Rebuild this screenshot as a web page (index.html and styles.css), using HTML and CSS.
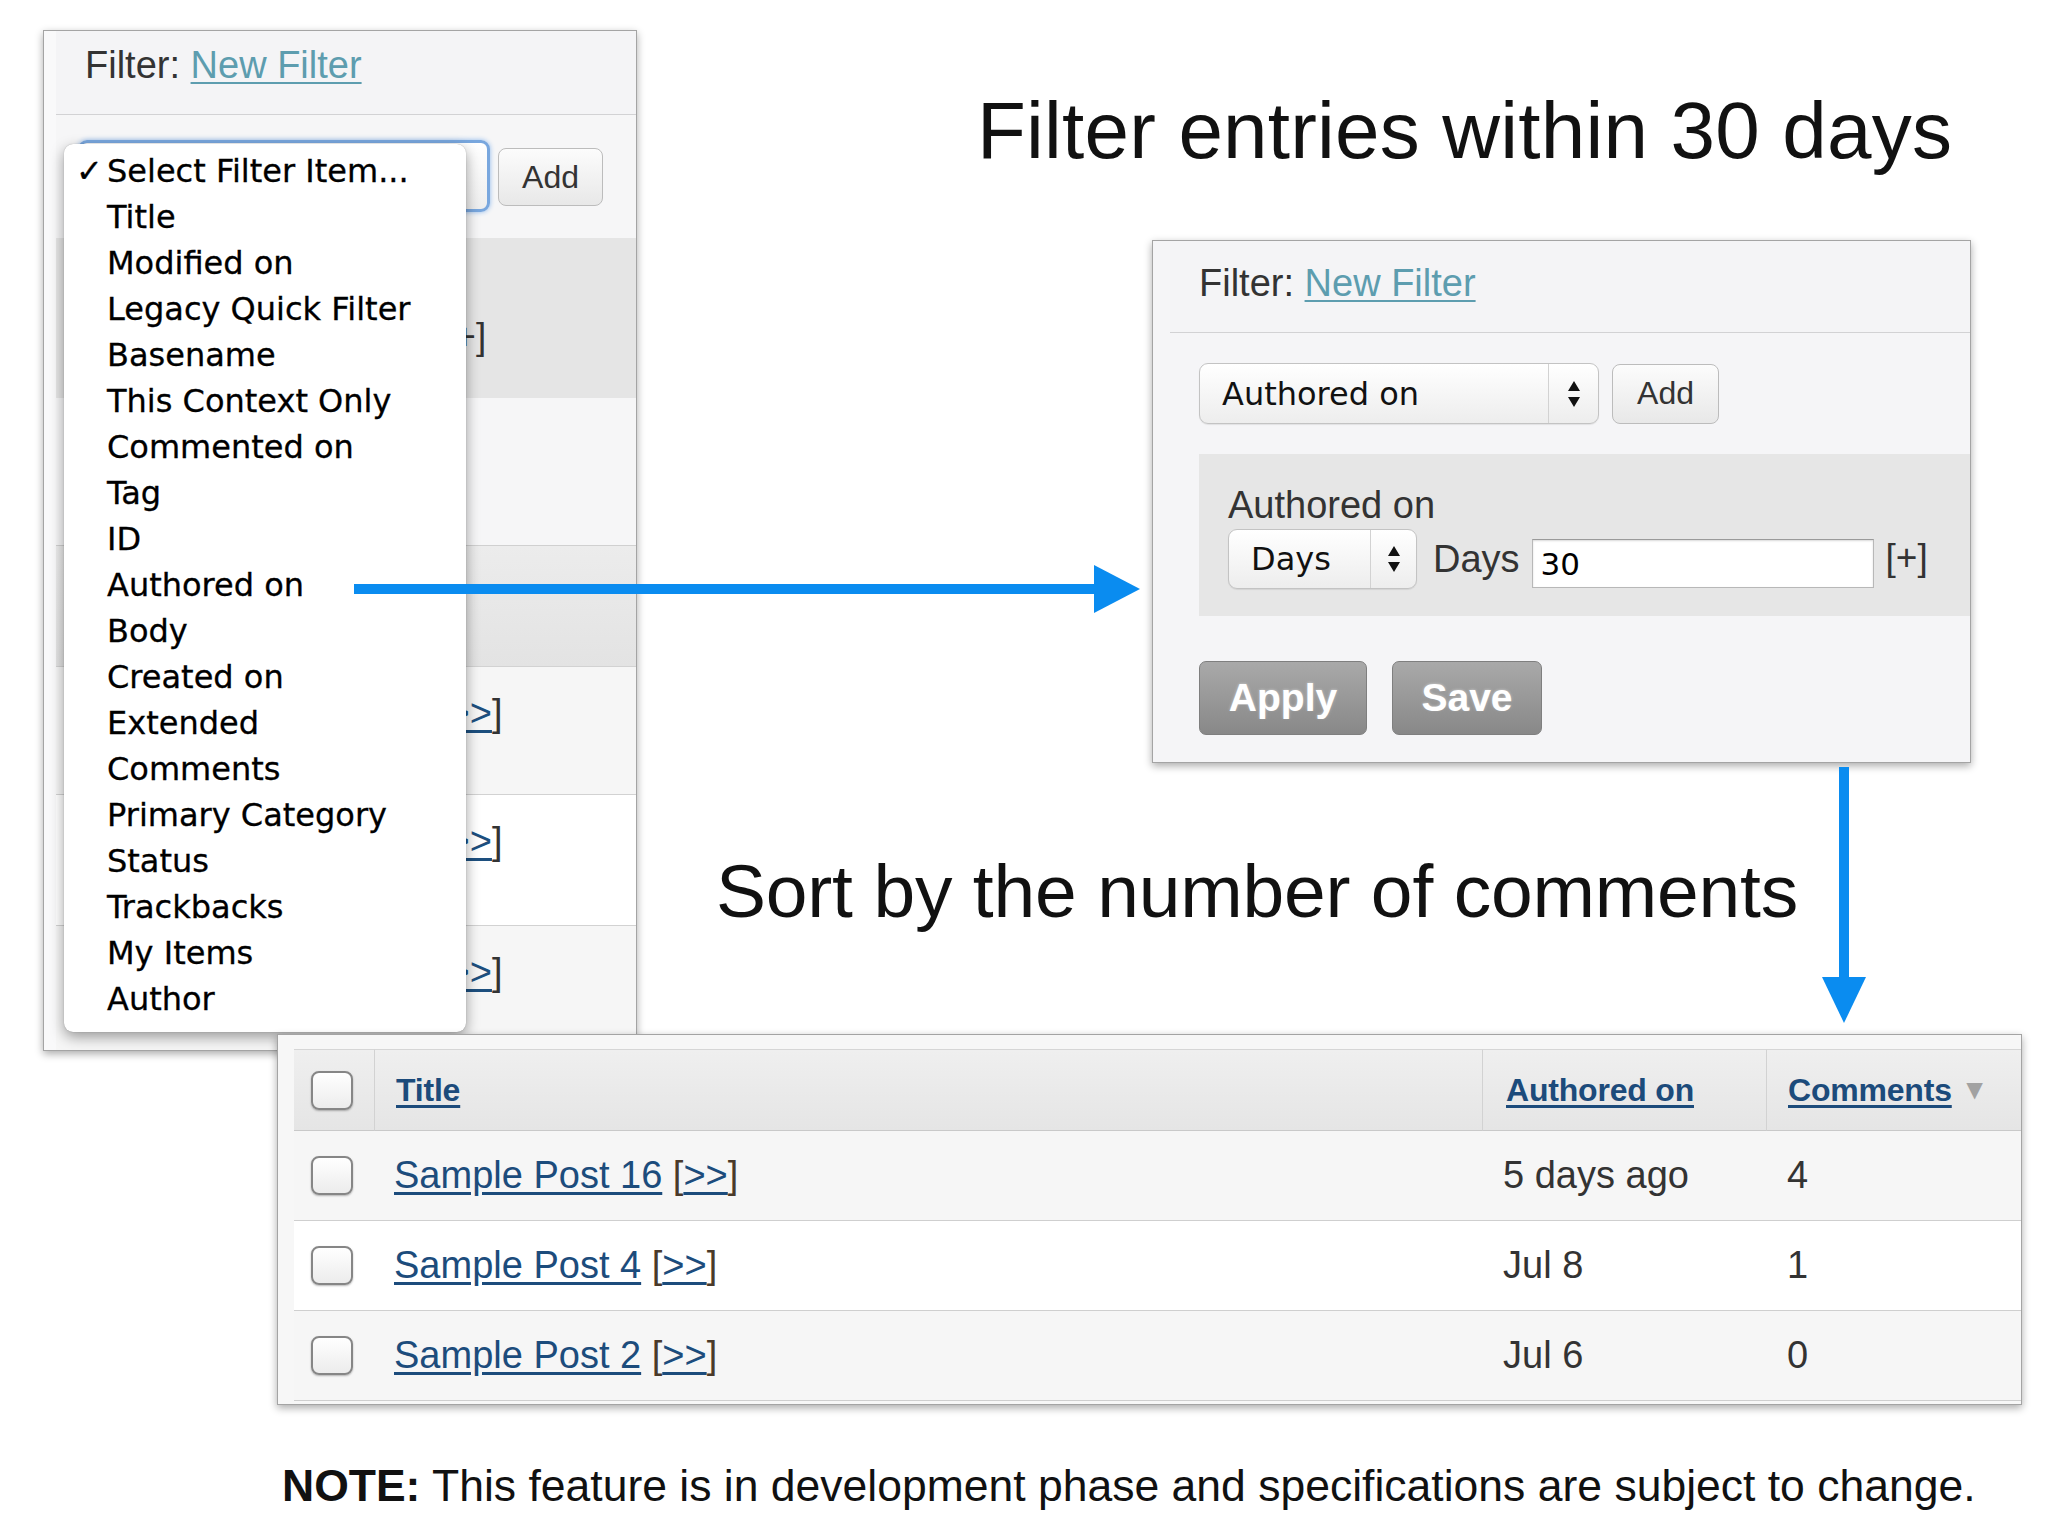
FILE: index.html
```html
<!DOCTYPE html>
<html>
<head>
<meta charset="utf-8">
<link rel="stylesheet" href="styles.css">
</head>
<body>
<div class="stage">

  <!-- Left panel (partially hidden behind the open menu) -->
  <div class="panel lp">
    <div class="ph lph">Filter: <a class="flink">New Filter</a></div>
    <div class="lsel-row">
      <div class="lsel"></div>
      <div class="btn-add lbtn">Add</div>
    </div>
    <div class="lgray1"><span class="plus">[+]</span></div>
    <div class="llight"></div>
    <div class="lthead"></div>
    <div class="lrow alt r1"><span class="more">[<a>&gt;&gt;</a>]</span></div>
    <div class="lrow r2"><span class="more">[<a>&gt;&gt;</a>]</span></div>
    <div class="lrow alt r3"><span class="more">[<a>&gt;&gt;</a>]</span></div>
  </div>

  <!-- Open popup menu -->
  <ul class="menu">
    <li><span class="chk">✓</span>Select Filter Item...</li>
    <li><span class="chk"></span>Title</li>
    <li><span class="chk"></span>Modified on</li>
    <li><span class="chk"></span>Legacy Quick Filter</li>
    <li><span class="chk"></span>Basename</li>
    <li><span class="chk"></span>This Context Only</li>
    <li><span class="chk"></span>Commented on</li>
    <li><span class="chk"></span>Tag</li>
    <li><span class="chk"></span>ID</li>
    <li><span class="chk"></span>Authored on</li>
    <li><span class="chk"></span>Body</li>
    <li><span class="chk"></span>Created on</li>
    <li><span class="chk"></span>Extended</li>
    <li><span class="chk"></span>Comments</li>
    <li><span class="chk"></span>Primary Category</li>
    <li><span class="chk"></span>Status</li>
    <li><span class="chk"></span>Trackbacks</li>
    <li><span class="chk"></span>My Items</li>
    <li><span class="chk"></span>Author</li>
  </ul>

  <h1 class="cap cap1">Filter entries within 30 days</h1>

  <!-- Right filter panel -->
  <div class="panel rp">
    <div class="ph rph">Filter: <a class="flink">New Filter</a></div>
    <div class="rbody">
      <div class="rsel-row">
        <div class="sel sel-main">
          <span class="val">Authored on</span>
          <span class="arr"><svg width="14" height="26" viewBox="0 0 14 26"><path d="M7 0 L13 10 L1 10 Z M1 16 L13 16 L7 26 Z" fill="#111"/></svg></span>
        </div>
        <div class="btn-add">Add</div>
      </div>
      <div class="rgray">
        <div class="rlabel">Authored on</div>
        <div class="rline">
          <div class="sel sel-days">
            <span class="val">Days</span>
            <span class="arr"><svg width="14" height="26" viewBox="0 0 14 26"><path d="M7 0 L13 10 L1 10 Z M1 16 L13 16 L7 26 Z" fill="#111"/></svg></span>
          </div>
          <span class="dlabel">Days</span>
          <div class="inp">30</div>
          <span class="rplus">[+]</span>
        </div>
      </div>
      <div class="actions">
        <div class="gbtn apply">Apply</div>
        <div class="gbtn save">Save</div>
      </div>
    </div>
  </div>

  <h2 class="cap cap2">Sort by the number of comments</h2>

  <!-- Listing table -->
  <div class="panel tp">
    <div class="grid">
      <div class="c hc cb"><span class="box"></span></div>
      <div class="c hc sep"><a class="hl">Title</a></div>
      <div class="c hc sep"><a class="hl">Authored on</a></div>
      <div class="c hc sep"><a class="hl">Comments</a><span class="sort">▼</span></div>

      <div class="c alt cb"><span class="box"></span></div>
      <div class="c alt tt"><a class="pl">Sample Post 16</a>&nbsp;<span class="br">[</span><a class="pl">&gt;&gt;</a><span class="br">]</span></div>
      <div class="c alt dt">5 days ago</div>
      <div class="c alt nm">4</div>

      <div class="c cb"><span class="box"></span></div>
      <div class="c tt"><a class="pl">Sample Post 4</a>&nbsp;<span class="br">[</span><a class="pl">&gt;&gt;</a><span class="br">]</span></div>
      <div class="c dt">Jul 8</div>
      <div class="c nm">1</div>

      <div class="c alt cb"><span class="box"></span></div>
      <div class="c alt tt"><a class="pl">Sample Post 2</a>&nbsp;<span class="br">[</span><a class="pl">&gt;&gt;</a><span class="br">]</span></div>
      <div class="c alt dt">Jul 6</div>
      <div class="c alt nm">0</div>
    </div>
  </div>

  <!-- Arrows -->
  <svg class="arrow harrow" width="786" height="48" viewBox="0 0 786 48">
    <rect x="0" y="19" width="744" height="10" fill="#0a8cf0"/>
    <polygon points="740,0 786,24 740,48" fill="#0a8cf0"/>
  </svg>
  <svg class="arrow varrow" width="44" height="256" viewBox="0 0 44 256">
    <rect x="17" y="0" width="10" height="214" fill="#0a8cf0"/>
    <polygon points="0,210 44,210 22,256" fill="#0a8cf0"/>
  </svg>

  <p class="note"><b>NOTE:</b> This feature is in development phase and specifications are subject to change.</p>
</div>
</body>
</html>
```

FILE: styles.css
```css
html, body {
  margin: 0;
  padding: 0;
  background: #ffffff;
}

.stage {
  position: relative;
  width: 2048px;
  height: 1536px;
  overflow: hidden;
  background: #ffffff;
  font-family: "Liberation Sans", Arial, sans-serif;
  color: #1a1a1a;
}

/* ---------- generic panel ---------- */
.panel {
  position: absolute;
  box-sizing: border-box;
  border: 1px solid #a4a4a4;
  box-shadow: 0 3px 8px rgba(0, 0, 0, 0.33);
  display: flex;
  flex-direction: column;
  overflow: hidden;
}

.ph {
  box-sizing: border-box;
  font-family: "Liberation Sans", Arial, sans-serif;
  font-size: 38px;
  line-height: 44px;
  color: #333333;
  border-bottom: 1px solid #d2d2d4;
  background: #f4f4f6;
}

.flink {
  color: #5d9daf;
  text-decoration: underline;
  text-decoration-thickness: 2px;
  text-underline-offset: 4px;
}

/* ---------- left panel ---------- */
.lp {
  left: 43px;
  top: 30px;
  width: 594px;
  height: 1021px;
  padding-left: 12px;
  background: #f9f9fa;
}

.lph {
  height: 84px;
  padding: 12px 0 0 29px;
}

.lsel-row {
  height: 123px;
  box-sizing: border-box;
  display: flex;
  align-items: flex-start;
  padding-left: 22px;
  background: #f6f6f7;
}

.lsel {
  margin-top: 25px;
  width: 412px;
  height: 72px;
  box-sizing: border-box;
  border: 3px solid #79a7de;
  border-radius: 9px;
  box-shadow: 0 0 5px #8db8ec;
  background: linear-gradient(#ffffff, #eeeeee);
}

.btn-add {
  box-sizing: border-box;
  width: 107px;
  height: 60px;
  margin-left: 13px;
  border: 1px solid #bcbcbc;
  border-radius: 8px;
  background: linear-gradient(#fcfcfc, #e8e8e8);
  font-family: "Liberation Sans", Arial, sans-serif;
  font-size: 32px;
  color: #333333;
  display: flex;
  align-items: center;
  justify-content: center;
}

.lbtn {
  margin-top: 33px;
  margin-left: 8px;
  width: 105px;
  height: 58px;
}

.lgray1 {
  height: 160px;
  box-sizing: border-box;
  background: #e5e5e5;
  padding: 77px 0 0 388px;
  font-size: 37px;
  line-height: 44px;
  color: #333333;
}

.llight {
  height: 148px;
  box-sizing: border-box;
  background: #f6f6f7;
  border-bottom: 1px solid #d0d0d0;
}

.lthead {
  height: 120px;
  background: linear-gradient(#ececec, #e3e3e3);
}

.lrow {
  box-sizing: border-box;
  padding: 24px 0 0 381px;
  font-size: 38px;
  line-height: 44px;
  color: #333333;
  border-top: 1px solid #d2d2d2;
  background: #ffffff;
}

.lrow.alt { background: #f6f6f6; }
.r1 { height: 128px; }
.r2 { height: 131px; }
.r3 { flex: 1; }

.more a {
  color: #1d4f7e;
  text-decoration: underline;
  text-underline-offset: 4px;
}

/* ---------- popup menu ---------- */
.menu {
  position: absolute;
  left: 64px;
  top: 144px;
  width: 402px;
  height: 888px;
  margin: 0;
  padding: 4px 0 0 0;
  box-sizing: border-box;
  list-style: none;
  background: #ffffff;
  border-radius: 9px;
  box-shadow: 0 5px 14px rgba(0, 0, 0, 0.38), 0 0 1px rgba(0, 0, 0, 0.35);
  font-family: "DejaVu Sans", "Liberation Sans", sans-serif;
  font-size: 32px;
  color: #000000;
  -webkit-text-stroke: 0.3px #000000;
}

.menu li {
  display: flex;
  align-items: center;
  height: 46px;
  padding-left: 12px;
  white-space: nowrap;
}

.chk {
  display: inline-block;
  width: 31px;
  flex: none;
  font-size: 32px;
  font-weight: 700;
}

/* ---------- captions ---------- */
.cap {
  position: absolute;
  margin: 0;
  font-family: "Liberation Sans", Arial, sans-serif;
  font-weight: 400;
  color: #111111;
  white-space: nowrap;
}

.cap1 {
  left: 977px;
  top: 91px;
  font-size: 80px;
  line-height: 80px;
  letter-spacing: 0.2px;
}

.cap2 {
  left: 716px;
  top: 853px;
  font-size: 75px;
  line-height: 76px;
  letter-spacing: -0.2px;
}

.note {
  position: absolute;
  margin: 0;
  left: 282px;
  top: 1464px;
  font-size: 44.5px;
  line-height: 44px;
  color: #111111;
  white-space: nowrap;
}

.note b { font-weight: 700; }

/* ---------- right panel ---------- */
.rp {
  left: 1152px;
  top: 240px;
  width: 819px;
  height: 523px;
  padding-left: 17px;
  background: #f5f5f7;
}

.rph {
  height: 92px;
  padding: 20px 0 0 29px;
}

.rbody {
  flex: 1;
  padding-left: 29px;
  display: flex;
  flex-direction: column;
}

.rsel-row {
  display: flex;
  align-items: center;
  margin-top: 30px;
}

.sel {
  box-sizing: border-box;
  display: flex;
  border: 1px solid #c3c3c3;
  border-radius: 9px;
  background: linear-gradient(#ffffff, #ededed);
  box-shadow: 0 1px 1px rgba(0, 0, 0, 0.08);
  font-family: "DejaVu Sans", "Liberation Sans", sans-serif;
  font-size: 32px;
  color: #111111;
}

.sel .val {
  flex: 1;
  display: flex;
  align-items: center;
}

.sel .arr {
  border-left: 1px solid #d2d2d2;
  display: flex;
  align-items: center;
  justify-content: center;
}

.sel-main {
  width: 400px;
  height: 61px;
}

.sel-main .val { padding-left: 22px; }
.sel-main .arr { width: 49px; }

.rgray {
  margin-top: 30px;
  height: 162px;
  box-sizing: border-box;
  background: #e6e6e6;
  padding: 29px 0 0 29px;
}

.rlabel {
  font-size: 38px;
  line-height: 44px;
  color: #333333;
}

.rline {
  display: flex;
  align-items: center;
  margin-top: 2px;
}

.sel-days {
  width: 189px;
  height: 60px;
}

.sel-days .val { padding-left: 22px; }
.sel-days .arr { width: 45px; }

.dlabel {
  margin-left: 16px;
  font-size: 38px;
  color: #333333;
}

.inp {
  box-sizing: border-box;
  margin-left: 12px;
  margin-top: 8px;
  width: 342px;
  height: 49px;
  background: #ffffff;
  border: 1px solid #b8b8b8;
  border-top-color: #9a9a9a;
  box-shadow: inset 0 1px 2px rgba(0, 0, 0, 0.15);
  padding-left: 8px;
  font-family: "DejaVu Sans", "Liberation Sans", sans-serif;
  font-size: 31px;
  line-height: 49px;
  color: #000000;
}

.rplus {
  margin-left: 12px;
  font-size: 37px;
  color: #333333;
  margin-top: -2px;
}

.actions {
  display: flex;
  gap: 25px;
  margin-top: 45px;
}

.gbtn {
  box-sizing: border-box;
  height: 74px;
  border: 1px solid #7f7f7f;
  border-radius: 7px;
  background: linear-gradient(#a9a9a9, #888888);
  color: #ffffff;
  font-weight: 700;
  font-size: 39px;
  display: flex;
  align-items: center;
  justify-content: center;
  text-shadow: 0 0 3px rgba(255, 255, 255, 0.6), 0 1px 2px rgba(0, 0, 0, 0.2);
}

.apply { width: 168px; }
.save { width: 150px; }

/* ---------- table panel ---------- */
.tp {
  left: 277px;
  top: 1034px;
  width: 1745px;
  height: 371px;
  padding: 14px 0 0 16px;
  background: #f7f7f7;
}

.grid {
  display: grid;
  grid-template-columns: 80px 1108px 284px 1fr;
  grid-template-rows: 82px 90px 90px 90px;
}

.c {
  box-sizing: border-box;
  display: flex;
  align-items: center;
  border-bottom: 1px solid #cfcfcf;
  background: #ffffff;
  font-size: 38px;
  color: #333333;
  white-space: nowrap;
}

.c.alt { background: #f6f6f6; }

.hc {
  background: linear-gradient(#efefef, #e5e5e5);
  border-top: 1px solid #d6d6d6;
  border-bottom: 1px solid #c9c9c9;
}

.hc.sep { border-left: 1px solid #d2d2d2; }

.hc .hl {
  font-weight: 700;
  font-size: 32px;
  letter-spacing: -0.2px;
  color: #1c4b7b;
  text-decoration: underline;
  text-underline-offset: 4px;
}

.hc:nth-child(2) { padding-left: 21px; }
.hc:nth-child(3) { padding-left: 23px; }
.hc:nth-child(4) { padding-left: 21px; }

.sort {
  margin-left: 9px;
  font-size: 28px;
  color: #a2a2a2;
}

.cb { padding-left: 17px; }

.box {
  display: block;
  box-sizing: border-box;
  width: 42px;
  height: 39px;
  border: 2px solid #868686;
  border-radius: 8px;
  background: linear-gradient(#ffffff, #ececec);
  box-shadow: 0 1px 2px rgba(0, 0, 0, 0.28);
}

.tt { padding-left: 20px; }
.dt { padding-left: 21px; }
.nm { padding-left: 21px; }

.pl {
  color: #1c4c7c;
  text-decoration: underline;
  text-underline-offset: 4px;
}

.br { color: #4a3a2a; }

/* ---------- arrows ---------- */
.arrow { position: absolute; display: block; }
.harrow { left: 354px; top: 565px; }
.varrow { left: 1822px; top: 767px; }
```
